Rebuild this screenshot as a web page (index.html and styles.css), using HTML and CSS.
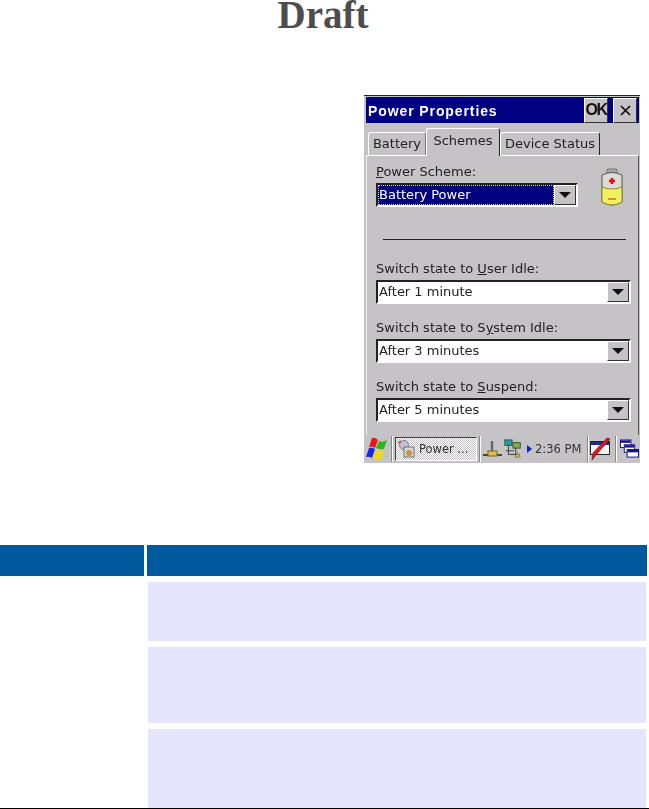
FILE: index.html
```html
<!DOCTYPE html>
<html>
    <head>
        <meta charset="utf-8">
        <title>Power Properties</title>
        <link rel="stylesheet" href="styles.css">
    </head>
    <body>

    <h1 class="draft">Draft</h1>

    <div class="device">
        <div class="titlebar">
            <span class="title">Power Properties</span>
            <button class="cap-btn ok">OK</button>
            <button class="cap-btn close">
                <svg width="13" height="13" viewBox="0 0 13 13"><path d="M2 2 L11 11 M11 2 L2 11" stroke="#111" stroke-width="1.7"/></svg>
            </button>
        </div>

        <div class="tabs">
            <div class="tab tab-battery">Battery</div>
            <div class="tab tab-active">Schemes</div>
            <div class="tab tab-status">Device Status</div>
        </div>

        <div class="panel">
            <div class="scheme-row">
                <div class="scheme-left">
                    <label class="field-label"><u>P</u>ower Scheme:</label>
                    <div class="select select-scheme">
                        <span class="value value-selected"><span class="sel-text">Battery Power</span></span>
                        <span class="arrow"><i></i></span>
                    </div>
                </div>
                <svg class="battery" width="26" height="40" viewBox="0 0 26 40">
                    <rect x="8" y="1" width="10" height="5" rx="1" fill="#a8a8a8" stroke="#777"/>
                    <path d="M3 7 Q13 2 23 7 V34 Q13 40 3 34 Z" fill="#dcdcd4" stroke="#555"/>
                    <path d="M3 19 Q13 23 23 19 V34 Q13 40 3 34 Z" fill="#f0f060" stroke="#8a8a30"/>
                    <path d="M10 13 H16 M13 10 V16" stroke="#e81010" stroke-width="2.6"/>
                    <path d="M9 31 H17" stroke="#d87030" stroke-width="1.6"/>
                </svg>
            </div>

            <div class="divider"></div>

            <label class="field-label">Switch state to <u>U</u>ser Idle:</label>
            <div class="select">
                <span class="value">After 1 minute</span>
                <span class="arrow"><i></i></span>
            </div>

            <label class="field-label">Switch state to S<u>y</u>stem Idle:</label>
            <div class="select">
                <span class="value">After 3 minutes</span>
                <span class="arrow"><i></i></span>
            </div>

            <label class="field-label">Switch state to <u>S</u>uspend:</label>
            <div class="select">
                <span class="value">After 5 minutes</span>
                <span class="arrow"><i></i></span>
            </div>
        </div>

        <div class="taskbar">
            <svg class="start" width="22" height="24" viewBox="0 0 22 24">
                <path d="M6 1 Q9 0 12 3 L9 11 Q6 9 3 10 Z" fill="#e81818"/>
                <path d="M13 4 Q16 6 21 3 L18 12 Q15 13 10 11 Z" fill="#28b818"/>
                <path d="M3 11 Q6 10 9 12 L6 21 Q3 19 0 20 Z" fill="#1828e0"/>
                <path d="M10 13 Q14 15 18 13 L15 23 Q11 24 7 21 Z" fill="#f0d818"/>
            </svg>
            <span class="sep"></span>
            <div class="task-btn">
                <svg width="20" height="20" viewBox="0 0 20 20">
                    <circle cx="7" cy="6" r="4.5" fill="#c0c0d0" stroke="#8080a0"/>
                    <path d="M1 4 L4 2" stroke="#d06030" stroke-width="2"/>
                    <rect x="7" y="8" width="10" height="10" fill="#d8d8d8" stroke="#707070"/>
                    <circle cx="12" cy="14" r="3" fill="#d09040"/>
                </svg>
                <span>Power ...</span>
            </div>
            <span class="sep"></span>
            <svg class="tray-icon" width="21" height="22" viewBox="0 0 21 22">
                <path d="M10 3 V14" stroke="#666" stroke-width="2.4"/>
                <path d="M1 17 H20" stroke="#444" stroke-width="2"/>
                <rect x="6" y="13" width="9" height="5" fill="#e0c040" stroke="#806010"/>
            </svg>
            <svg class="tray-icon" width="20" height="24" viewBox="0 0 22 24">
                <rect x="2" y="2" width="8" height="6" fill="#20a0a0" stroke="#305050"/>
                <rect x="11" y="5" width="8" height="6" fill="#80b040" stroke="#305030"/>
                <path d="M6 8 V18 H18 M14 11 V18 M3 14 H12" stroke="#333" fill="none"/>
                <path d="M13 21 L16 16 L19 21 Z" fill="#e0c020" stroke="#555" stroke-width=".6"/>
            </svg>
            <i class="tray-arrow"></i>
            <span class="clock">2:36 PM</span>
            <span class="sep"></span>
            <svg class="tray-icon" width="21" height="24" viewBox="0 0 21 24">
                <rect x=".5" y="4.5" width="19" height="13" fill="#f4f4f4" stroke="#222"/>
                <rect x="1" y="5" width="18" height="3" fill="#203080"/>
                <path d="M20 2 L6 18 L2 23 L3 16 L17 1 Z" fill="#e01818" stroke="#701010" stroke-width=".7"/>
            </svg>
            <span class="sep sep-last"></span>
            <svg class="tray-icon" width="19" height="22" viewBox="0 0 20 22">
                <rect x=".5" y="1.5" width="11" height="8" fill="#fff" stroke="#101080"/>
                <rect x="1" y="2" width="10" height="2.5" fill="#101080"/>
                <rect x="4.5" y="6.5" width="11" height="8" fill="#fff" stroke="#101080"/>
                <rect x="5" y="7" width="10" height="2.5" fill="#101080"/>
                <rect x="7.5" y="11.5" width="12" height="8" fill="#fff" stroke="#101080"/>
                <rect x="8" y="12" width="11" height="2.5" fill="#101080"/>
            </svg>
        </div>
    </div>

    <div class="grid">
        <div class="head"></div>
        <div class="head"></div>
        <div class="col-left"></div>
        <div class="col-right">
            <div class="cell cell-1"></div>
            <div class="cell cell-2"></div>
            <div class="cell cell-3"></div>
        </div>
    </div>

</body>
</html>
```

FILE: styles.css
```css
body, html {
    margin: 0;
    padding: 0;
    height: 809px;
    overflow: hidden;
    background: #fff;
}
body {
    border-bottom: solid 1px #000;
    box-sizing: border-box;
}
.draft {
    margin: 0;
    height: 95px;
    padding-right: 3px;
    text-align: center;
    font-family: "Liberation Serif", serif;
    font-size: 39px;
    line-height: 30px;
    font-weight: bold;
    color: #4d4d4d;
}
.device {
    margin-left: 364px;
    width: 276px;
    height: 368px;
    background: #c6c3c6;
    border-top: solid 1px #222;
    box-sizing: border-box;
    font-family: "DejaVu Sans", sans-serif;
    font-size: 13px;
    color: #222;
    display: flex;
    flex-direction: column;
    filter: blur(.35px);
}
.titlebar {
    flex: none;
    height: 26px;
    margin: 1px 1px 0 2px;
    background: #000080;
    display: flex;
    align-items: center;
    padding-right: 2px;
}
.title {
    flex: 1;
    padding: 1px 0 0 2px;
    color: #fff;
    font-size: 14px;
    font-weight: bold;
    font-family: "Liberation Sans", sans-serif;
    letter-spacing: .9px;
}
.cap-btn {
    width: 24px;
    height: 25px;
    padding: 0;
    margin-left: 5px;
    background: #c6c3c6;
    border: solid 1px;
    border-color: #fff #333 #333 #fff;
    font-family: "Liberation Sans", sans-serif;
    font-size: 16px;
    font-weight: bold;
    letter-spacing: -1.5px;
    color: #111;
    display: flex;
    align-items: center;
    justify-content: center;
}
.tabs {
    flex: none;
    height: 32px;
    display: flex;
    align-items: flex-end;
    padding-left: 4px;
    position: relative;
    z-index: 1;
}
.tab {
    height: 23px;
    line-height: 22px;
    text-align: center;
    box-sizing: border-box;
    border: solid 1px;
    border-color: #fff #222 transparent #fff;
    border-bottom: none;
    border-radius: 3px 3px 0 0;
}
.tab-battery {
    width: 58px;
    border-right-color: #777;
}
.tab-active {
    width: 74px;
    height: 28px;
    line-height: 23px;
    margin-bottom: -1px;
    background: #c6c3c6;
    position: relative;
}
.tab-status {
    width: 100px;
}
.panel {
    flex: 1;
    min-height: 0;
    margin-left: 2px;
    margin-right: 1px;
    padding-left: 9px;
    border-top: solid 1px #fff;
    border-left: solid 1px #eee;
    border-right: solid 1px #555;
}
.scheme-row {
    display: flex;
    height: 52px;
    padding-top: 8px;
    box-sizing: border-box;
}
.scheme-left {
    width: 202px;
}
.battery {
    margin: 4px 0 0 21px;
}
.field-label {
    display: block;
    height: 19px;
    line-height: 15px;
}
.select {
    width: 255px;
    height: 24px;
    box-sizing: border-box;
    background: #fff;
    border: solid 2px;
    border-color: #222 #fff #fff #222;
    display: flex;
    margin-bottom: 16px;
}
.select-scheme {
    width: 202px;
    margin-bottom: 0;
}
.select:last-child {
    margin-bottom: 0;
}
.value {
    flex: 1;
    line-height: 20px;
    padding-left: 1px;
    white-space: nowrap;
}
.value-selected {
    background: #000080;
    color: #fff;
    outline: dotted 1px #ccc;
    outline-offset: -1px;
}
.arrow {
    width: 22px;
    background: #c6c3c6;
    border: solid 1px;
    border-color: #fff #333 #333 #fff;
    box-sizing: border-box;
    display: flex;
    align-items: center;
    justify-content: center;
}
.arrow i {
    width: 0;
    height: 0;
    border-style: solid;
    border-width: 6px 6px 0 6px;
    border-color: #111 transparent transparent transparent;
}
.divider {
    width: 243px;
    height: 1px;
    background: #222;
    margin: 31px 0 21px 7px;
}
.taskbar {
    flex: none;
    height: 28px;
    display: flex;
    align-items: center;
    background: #c6c3c6;
    font-size: 11.5px;
    color: #333;
    padding-left: 2px;
}
.start {
    margin-right: 2px;
}
.sep {
    width: 1px;
    height: 26px;
    background: #888;
    border-right: solid 1px #fff;
    margin: 0 1px;
}
.sep-last {
    margin: 0 3px 0 4px;
}
.task-btn {
    width: 82px;
    height: 24px;
    box-sizing: border-box;
    margin: 0 1px;
    border: solid 1px;
    border-color: #444 #fff #fff #444;
    background: repeating-conic-gradient(#fff 0 25%, #c6c3c6 0 50%) 0 0 / 2px 2px;
    display: flex;
    align-items: center;
    gap: 2px;
    padding-left: 1px;
    white-space: nowrap;
}
.tray-icon {
    flex: none;
}
.tray-arrow {
    width: 0;
    height: 0;
    margin: 0 3px 0 4px;
    border-style: solid;
    border-width: 4px 0 4px 5px;
    border-color: transparent transparent transparent #1020c0;
}
.clock {
    white-space: nowrap;
    margin-right: 5px;
}
.grid {
    display: grid;
    grid-template-columns: 144px 500px;
    grid-template-rows: 31px auto;
    column-gap: 3px;
    margin-top: 82px;
}
.head {
    background: #00599c;
}
.col-right {
    padding: 6px 1px 0 1px;
    display: flex;
    flex-direction: column;
    gap: 6px;
}
.cell {
    background: #e5e5fd;
}
.cell-1 {
    height: 59px;
}
.cell-2 {
    height: 76px;
}
.cell-3 {
    height: 79px;
}
```
